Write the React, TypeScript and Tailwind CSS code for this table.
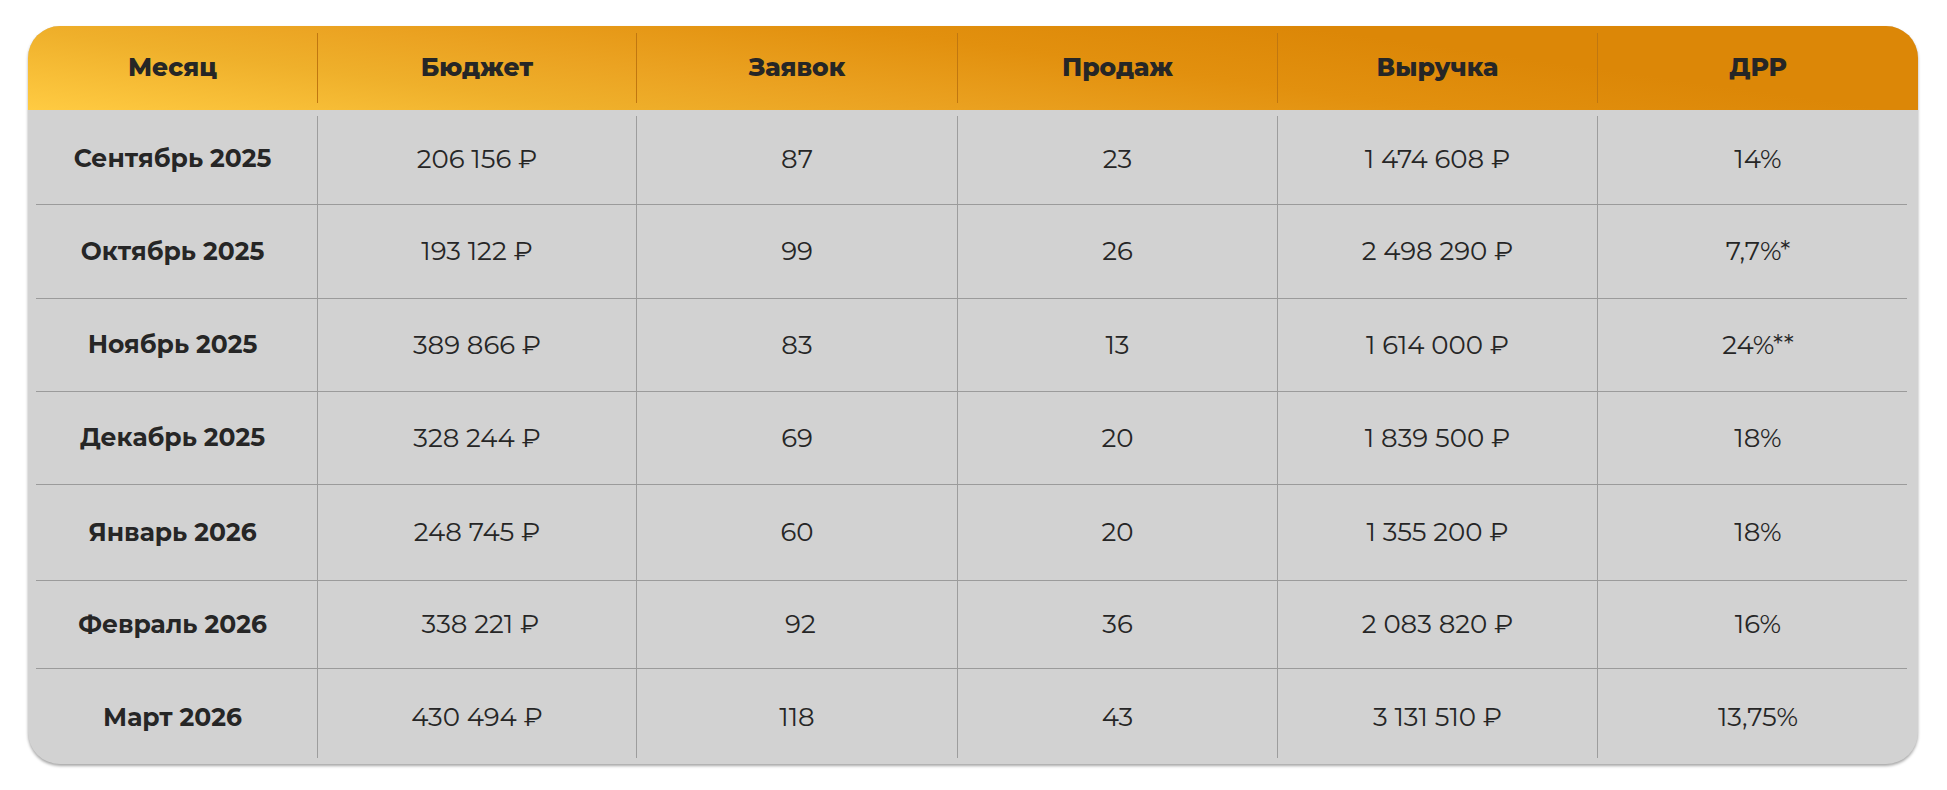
import React from 'react';

interface Row {
  month: string;
  budget: string;
  leads: string;
  sales: string;
  revenue: string;
  drr: string;
  rowClass: string;
}

const rows: Row[] = [
  { month: 'Сентябрь 2025', budget: '206 156 ₽', leads: '87', sales: '23', revenue: '1 474 608 ₽', drr: '14%', rowClass: 'h-[88px] pb-[2px]' },
  { month: 'Октябрь 2025', budget: '193 122 ₽', leads: '99', sales: '26', revenue: '2 498 290 ₽', drr: '7,7%*', rowClass: 'h-[93px]' },
  { month: 'Ноябрь 2025', budget: '389 866 ₽', leads: '83', sales: '13', revenue: '1 614 000 ₽', drr: '24%**', rowClass: 'h-[92px]' },
  { month: 'Декабрь 2025', budget: '328 244 ₽', leads: '69', sales: '20', revenue: '1 839 500 ₽', drr: '18%', rowClass: 'h-[92px]' },
  { month: 'Январь 2026', budget: '248 745 ₽', leads: '60', sales: '20', revenue: '1 355 200 ₽', drr: '18%', rowClass: 'h-[95px]' },
  { month: 'Февраль 2026', budget: '\u00a0338 221 ₽', leads: '\u00a092', sales: '36', revenue: '2 083 820 ₽', drr: '16%', rowClass: 'h-[87px]' },
  { month: 'Март 2026', budget: '430 494 ₽', leads: '118', sales: '43', revenue: '3 131 510 ₽', drr: '13,75%', rowClass: 'h-[89px] pt-[8px]' },
];

const headers = ['Месяц', 'Бюджет', 'Заявок', 'Продаж', 'Выручка', 'ДРР'];

const cols = 'grid grid-cols-[289px_319px_321px_320px_320px_321px]';

const App: React.FC = () => {
  return (
    <div className="min-h-[790px] bg-white pt-[26px] pl-[28px] font-['Montserrat','Inter',sans-serif] text-[#262626]">
      <div className="w-[1890px] overflow-hidden rounded-[32px] bg-[#d2d2d2] shadow-[0_2px_3px_rgba(0,0,0,0.35)]">
        <div className={`${cols} h-[84px] items-center bg-[linear-gradient(8deg,#ffcb42_0%,#efb02b_23%,#eba322_36%,#e2900e_57%,#dc8707_75%)]`}>
          {headers.map((h, i) => (
            <div
              key={h}
              className={`flex h-[70px] items-center justify-center text-[25px] font-extrabold ${
                i > 0 ? 'border-l border-[#c07710]' : ''
              }`}
            >
              {h}
            </div>
          ))}
        </div>

        <div className="pt-[6px] pb-[6px]">
          {rows.map((r, idx) => (
            <React.Fragment key={r.month}>
              {idx > 0 && <div className="ml-[8px] mr-[11px] h-px bg-[#9b9b9b]" />}
              <div className={cols}>
                <div className={`flex items-center justify-center text-[25px] font-bold ${r.rowClass}`}>{r.month}</div>
                {[r.budget, r.leads, r.sales, r.revenue, r.drr].map((v, j) => (
                  <div
                    key={j}
                    className={`flex items-center justify-center border-l border-[#9d9d9d] text-[26px] whitespace-pre ${r.rowClass}`}
                  >
                    {v}
                  </div>
                ))}
              </div>
            </React.Fragment>
          ))}
        </div>
      </div>
    </div>
  );
};

export default App;
